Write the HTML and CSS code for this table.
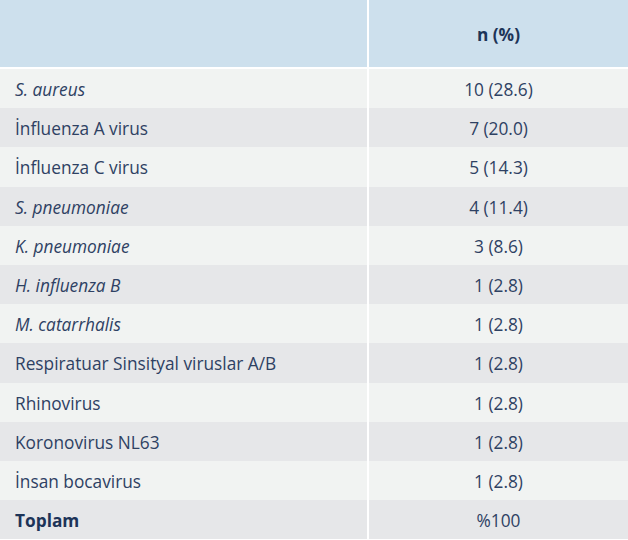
FILE: index.html
```html
<!DOCTYPE html>
<html lang="tr">
<head>
<meta charset="utf-8">
<link rel="stylesheet" href="styles.css">
</head>
<body>
<table class="data">
  <thead>
    <tr><th class="name"></th><th class="val">n (%)</th></tr>
  </thead>
  <tbody>
    <tr><td class="name"><i>S. aureus</i></td><td class="val">10 (28.6)</td></tr>
    <tr><td class="name">İnfluenza A virus</td><td class="val">7 (20.0)</td></tr>
    <tr><td class="name">İnfluenza C virus</td><td class="val">5 (14.3)</td></tr>
    <tr><td class="name"><i>S. pneumoniae</i></td><td class="val">4 (11.4)</td></tr>
    <tr><td class="name"><i>K. pneumoniae</i></td><td class="val">3 (8.6)</td></tr>
    <tr><td class="name"><i>H. influenza B</i></td><td class="val">1 (2.8)</td></tr>
    <tr><td class="name"><i>M. catarrhalis</i></td><td class="val">1 (2.8)</td></tr>
    <tr><td class="name">Respiratuar Sinsityal viruslar A/B</td><td class="val">1 (2.8)</td></tr>
    <tr><td class="name">Rhinovirus</td><td class="val">1 (2.8)</td></tr>
    <tr><td class="name">Koronovirus NL63</td><td class="val">1 (2.8)</td></tr>
    <tr><td class="name">İnsan bocavirus</td><td class="val">1 (2.8)</td></tr>
    <tr><td class="name"><b>Toplam</b></td><td class="val">%100</td></tr>
  </tbody>
</table>
</body>
</html>
```
FILE: styles.css
```css
html, body {
  margin: 0;
  padding: 0;
  background: #ffffff;
}
body {
  font-family: "Open Sans", "Noto Sans", sans-serif;
  font-size: 17.3px;
  color: #2e4163;
}
.data {
  width: 628px;
  border-collapse: separate;
  border-spacing: 0;
  table-layout: fixed;
}
.data th, .data td {
  padding: 9px 15px 7px;
  line-height: 23.2px;
  font-weight: 400;
  box-sizing: content-box;
}
.data th {
  background: #cde0ed;
  padding: 23px 15px 21px;
  line-height: 23px;
  border-bottom: 2px solid #ffffff;
  font-weight: 700;
  color: #1d3458;
}
.data .name {
  width: 337px;
  text-align: left;
  border-right: 2px solid #ffffff;
}
.data .val {
  text-align: center;
}
.data tbody tr:nth-child(odd) td {
  background: #f1f3f2;
}
.data tbody tr:nth-child(even) td {
  background: #e6e7e9;
}
.data b {
  color: #1d3458;
}
```
